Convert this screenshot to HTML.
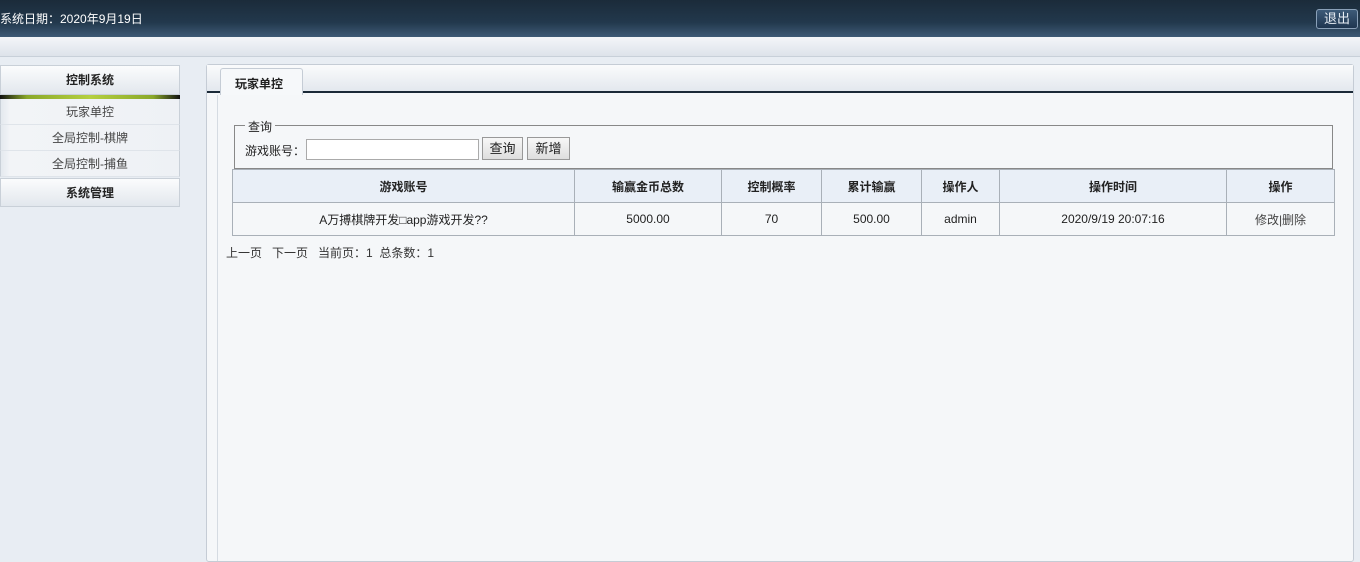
<!DOCTYPE html>
<html><head><meta charset="utf-8"><style>
*{box-sizing:border-box;margin:0;padding:0}
body{width:1360px;height:562px;overflow:hidden;background:#e8edf3;font-family:"Liberation Sans","Noto Sans CJK SC",sans-serif;font-size:12px;color:#222;position:relative}
.top{position:absolute;left:0;top:0;width:1360px;height:37px;background:linear-gradient(#1b2b3a,#22384c 60%,#3e5a76)}
.top .d{position:absolute;left:0;top:10px;color:#fff;font-size:12px}
.top .b{position:absolute;left:1316px;top:9px;width:42px;height:20px;border:1px solid #8aa0b8;border-radius:3px;background:linear-gradient(#3d5a78,#1f3650);color:#e8eef5;font-size:13px;text-align:center;line-height:18px}
.band{position:absolute;left:0;top:37px;width:1360px;height:20px;background:linear-gradient(#f4f6f9,#dde3ea);border-bottom:1px solid #c8d0d9}
.nav{position:absolute;left:0;width:180px;text-align:center}
.nh{height:30px;line-height:28px;font-weight:bold;background:linear-gradient(#fbfcfd,#e2e7ed);border:1px solid #c9d0d8}
.ni{height:26px;line-height:26px;color:#444;background:linear-gradient(90deg,#e4e9ef,#f2f4f7 5%,#eef1f5);border-bottom:1px solid #dfe4ea;border-left:1px solid #c9d0d8;border-right:1px solid #c9d0d8}
.green{height:4px;background:linear-gradient(90deg,#111,#8aa82a 15%,#b5d040 50%,#8aa82a 85%,#111)}
.main{position:absolute;left:206px;top:64px;width:1148px;height:498px;border:1px solid #c5ccd5;border-radius:3px;background:#f5f7f9}
.strip{position:absolute;left:0;top:0;width:1146px;height:28px;background:linear-gradient(#fafbfc,#e3e8ee);border-bottom:2px solid #1b2a38}
.tab{position:absolute;left:13px;top:3px;width:83px;height:27px;background:#f6f8fa;border:1px solid #c5ccd5;border-bottom:none;border-radius:3px 3px 0 0;font-weight:bold;padding:6px 0 0 14px}
.inner{position:absolute;left:10px;top:30px;width:1px;height:466px;background:#d5dbe2}
.fs{position:absolute;left:27px;top:60px;width:1099px;height:44px;border:1px solid #888}
.lg{position:absolute;left:10px;top:-8px;background:#f5f7f9;padding:0 3px;font-size:12px}
.inp{position:absolute;left:71px;top:13px;width:173px;height:21px;border:1px solid #aaa;background:#fff}
.btn{position:absolute;top:11px;height:23px;border:1px solid #999;background:linear-gradient(#f7f7f7,#dedede);font-size:13px;line-height:21px;text-align:center}
table{position:absolute;left:25px;top:104px;width:1103px;border-collapse:collapse}
td,th{border:1px solid #a9b0b8;text-align:center;height:33px}
th{background:#e9eff7;font-weight:bold}
td{background:#f5f7f9}
.pg{position:absolute;left:19px;top:179px;color:#333}
</style></head><body>
<div class="top"><div class="d">系统日期：2020年9月19日</div><div class="b">退出</div></div>
<div class="band"></div>
<div class="nav" style="top:65px"><div class="nh">控制系统</div><div class="green"></div>
<div class="ni">玩家单控</div><div class="ni">全局控制-棋牌</div><div class="ni">全局控制-捕鱼</div>
<div class="nh" style="height:29px;margin-top:1px">系统管理</div></div>
<div class="main">
<div class="strip"></div><div class="tab">玩家单控</div><div class="inner"></div>
<div class="fs"><span class="lg">查询</span><span style="position:absolute;left:10px;top:16px">游戏账号：</span><div class="inp"></div><div class="btn" style="left:247px;width:41px">查询</div><div class="btn" style="left:292px;width:43px">新增</div></div>
<table><tr><th style="width:342px">游戏账号</th><th style="width:147px">输赢金币总数</th><th style="width:100px">控制概率</th><th style="width:100px">累计输赢</th><th style="width:78px">操作人</th><th style="width:227px">操作时间</th><th>操作</th></tr>
<tr><td>A万搏棋牌开发□app游戏开发??</td><td>5000.00</td><td>70</td><td>500.00</td><td>admin</td><td>2020/9/19 20:07:16</td><td style="color:#444">修改|删除</td></tr></table>
<div class="pg">上一页&nbsp;&nbsp;&nbsp;下一页&nbsp;&nbsp;&nbsp;当前页：1&nbsp;&nbsp;总条数：1</div>
</div>
</body></html>
